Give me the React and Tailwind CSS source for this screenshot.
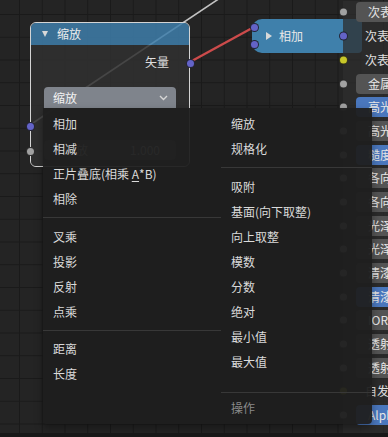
import React from 'react';

const SOCKET = {
  gray: 'bg-[#a1a1a1]',
  vec: 'bg-[#6363c7]',
  col: 'bg-[#c7c729]',
};

const Socket = ({ kind = 'gray', className = '' }) => (
  <span className={`absolute w-[9px] h-[9px] rounded-full border border-[#141414]/80 ${SOCKET[kind]} ${className}`} />
);

// inputs of the shader node on the right, cut off by the window edge
const bsdfRows = [
  { label: '次表面', field: 'gray' },
  { label: '次表面半径', socket: 'vec' },
  { label: '次表面颜色', socket: 'col' },
  { label: '金属度', field: 'gray' },
  { label: '高光', field: 'blue' },
  { label: '高光染色', field: 'gray' },
  { label: '糙度', field: 'blue' },
  { label: '各向异性', field: 'gray' },
  { label: '各向异性旋转', field: 'gray' },
  { label: '光泽', field: 'gray' },
  { label: '光泽染色', field: 'gray' },
  { label: '清漆', field: 'gray' },
  { label: '清漆粗糙度', field: 'blue' },
  { label: 'IOR', field: 'gray' },
  { label: '透射', field: 'gray' },
  { label: '透射粗糙度', field: 'gray' },
  { label: '自发光', socket: 'col' },
  { label: 'Alpha', field: 'blue' },
];

const Item = ({ children, muted }) => (
  <div className={`h-[25px] flex items-center pl-[10px] whitespace-pre ${muted ? 'text-[#8a8a8a]' : ''}`}>
    {children}
  </div>
);

const Sep = () => (
  <div className="h-[12.5px] flex items-center">
    <div className="h-px w-full bg-[#383838]" />
  </div>
);

const App = () => {
  return (
    <div className="w-[388px] h-[437px] flex flex-col bg-[#181818] font-['Noto_Sans_CJK_SC','Noto_Sans',sans-serif] text-[12px] text-[#dadada]">
      <div className="relative h-[433px] overflow-hidden bg-[#242424] bg-[linear-gradient(to_right,#1a1a1a_1px,transparent_1px),linear-gradient(to_bottom,#1a1a1a_1px,transparent_1px)] bg-size-[22.75px_22.75px] bg-position-[19px_14px]">
        {/* links */}
        <svg className="absolute inset-0" width="388" height="433">
          <line x1="30" y1="125" x2="232" y2="-10" stroke="#c2c2c2" strokeWidth="1.6" />
          <line x1="190" y1="62" x2="254" y2="27" stroke="#cc4b4b" strokeWidth="2.4" />
        </svg>

        {/* 相加 collapsed node */}
        <div className="absolute left-[252px] top-[19px] w-[110px] h-[34px] rounded-l-[10px] rounded-r-[4px] bg-[#3f80ab] flex items-center pl-[14px] gap-[7px] text-[#e8e8e8]">
          <span className="w-0 h-0 border-y-[4px] border-y-transparent border-l-[6px] border-l-[#d8d8d8]" />
          <span>相加</span>
          <Socket kind="vec" className="-left-[2.5px] top-[3.5px]" />
          <Socket kind="vec" className="-left-[2.5px] top-[20.5px]" />
        </div>

        {/* shader node on the right */}
        <div className="absolute left-[343px] top-[0.6px] w-[70px] bg-[#2e2e2e]/75 pb-[20px]">
          {bsdfRows.map((r) => (
            <div key={r.label} className="relative h-[23.7px] flex items-center whitespace-nowrap">
              <Socket kind={r.socket || 'gray'} className="-left-[4.5px] top-1/2 -translate-y-1/2" />
              {r.field ? (
                <div className={`ml-[13px] h-[20px] flex-1 rounded-[4px] pl-[12px] flex items-center overflow-hidden text-[#e6e6e6] ${r.field === 'blue' ? 'bg-[#4a77bd]' : 'bg-[#545454]'}`}>
                  {r.label}
                </div>
              ) : (
                <div className="ml-[22px] text-[#e0e0e0]">{r.label}</div>
              )}
            </div>
          ))}
        </div>

        {/* 缩放 vector math node */}
        <div className="absolute left-[30px] top-[22px] w-[160px] h-[145px] rounded-[6px] border border-[#d4d4d4] flex flex-col">
          <div className="h-[22px] rounded-t-[5px] bg-[#3e7eaa]/85 flex items-center pl-[11px] gap-[9px] text-[#ececec]">
            <span className="w-0 h-0 border-x-[3.5px] border-x-transparent border-t-[6px] border-t-[#d8d8d8]" />
            <span>缩放</span>
          </div>
          <div className="flex-1 rounded-b-[5px] bg-[#303030]/85 flex flex-col px-[13px]">
            <div className="h-[34px] flex items-center justify-end pr-[7px] text-[#dedede]">矢量</div>
            <div className="mt-[8px] h-[21px] rounded-t-[4px] bg-[#7f848c] flex items-center justify-between pl-[9px] pr-[8px] text-[#f2f2f2]">
              <span>缩放</span>
              <svg width="9" height="6" viewBox="0 0 9 6">
                <path d="M1 1 L4.5 4.5 L8 1" fill="none" stroke="#d6d6d6" strokeWidth="1.4" />
              </svg>
            </div>
            <div className="mt-[32px] h-[20px] rounded-[4px] bg-[#4a4a4a] flex items-center justify-between pl-[20px] pr-[16px]">
              <span>缩放</span>
              <span>1.000</span>
            </div>
          </div>
          <Socket kind="vec" className="-right-[5.5px] top-[35.5px]" />
          <Socket kind="vec" className="-left-[5.5px] top-[98.5px]" />
          <Socket kind="gray" className="-left-[5.5px] top-[123.5px]" />
        </div>

        {/* open dropdown menu */}
        <div className="absolute left-[43px] top-[108px] w-[329px] h-[316px] rounded-b-[4px] bg-[#1f1f1f]/95 flex pt-[3.5px] shadow-[0_4px_8px_rgba(0,0,0,0.35)]">
          <div className="w-[178px] flex flex-col">
            <Item>相加</Item>
            <Item>相减</Item>
            <Item>
              {'正片叠底(相乘 '}
              <span className="underline underline-offset-2">A</span>
              {'*B)'}
            </Item>
            <Item>相除</Item>
            <Sep />
            <Item>叉乘</Item>
            <Item>投影</Item>
            <Item>反射</Item>
            <Item>点乘</Item>
            <Sep />
            <Item>距离</Item>
            <Item>长度</Item>
          </div>
          <div className="flex-1 flex flex-col">
            <Item>缩放</Item>
            <Item>规格化</Item>
            <Sep />
            <Item>吸附</Item>
            <Item>基面(向下取整)</Item>
            <Item>向上取整</Item>
            <Item>模数</Item>
            <Item>分数</Item>
            <Item>绝对</Item>
            <Item>最小值</Item>
            <Item>最大值</Item>
            <div className="h-[21.5px] flex flex-col justify-end pb-[3px]">
              <div className="h-px w-full bg-[#383838]" />
            </div>
            <Item muted>操作</Item>
          </div>
        </div>
      </div>
      <div className="h-[4px] bg-[#181818]" />
    </div>
  );
};

export default App;
